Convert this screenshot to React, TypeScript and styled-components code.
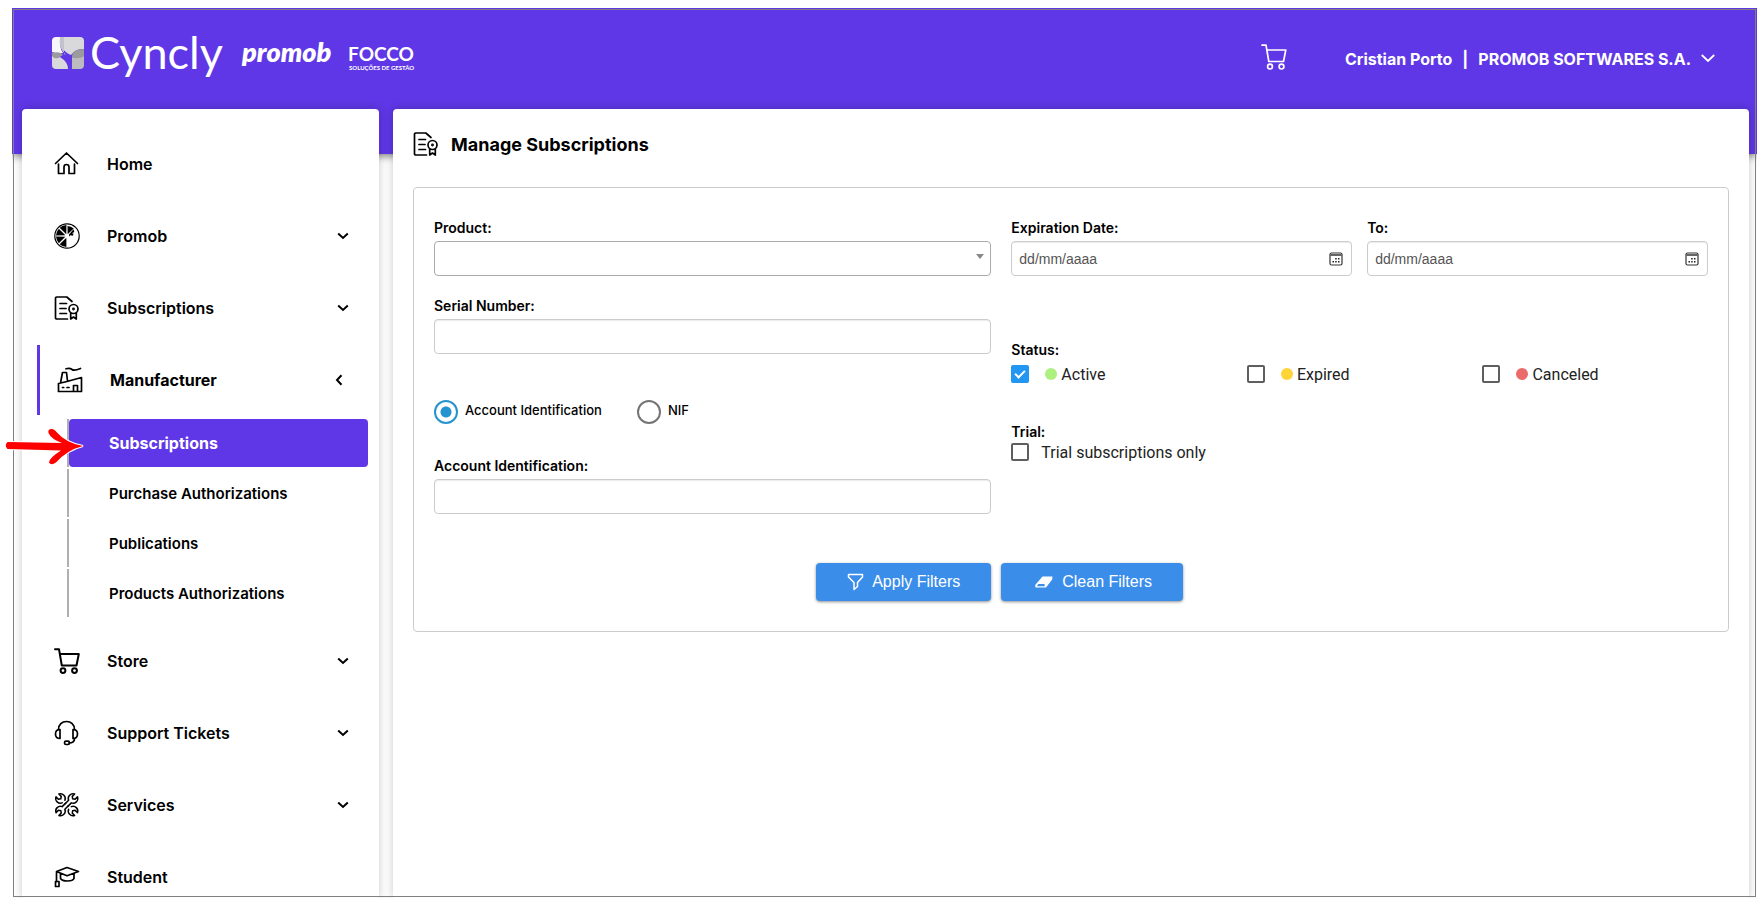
import React from "react";
import styled, { createGlobalStyle, css } from "styled-components";

const PURPLE = "#5f37e6";
const SANS = `Inter, "Liberation Sans", sans-serif`;

const GlobalStyle = createGlobalStyle`
  *, *::before, *::after { box-sizing: border-box; }
  html, body { margin: 0; background: #fff; }
  body { font-family: ${SANS}; color: #000; overflow: hidden; }
  ul { list-style: none; margin: 0; padding: 0; }
  a { color: inherit; text-decoration: none; }
  button, input, select { font: inherit; color: inherit; margin: 0; }
`;

/* ---------- page shell ---------- */

const Page = styled.div`
  position: relative;
  height: 100vh;
  padding: 8px 3px 5px 12px;
`;

const Frame = styled.div`
  position: relative;
  display: flex;
  flex-direction: column;
  height: 100%;
  overflow: hidden;
  &::after {
    content: "";
    position: absolute;
    inset: 1px;
    border: 1px solid #808080;
    pointer-events: none;
  }
`;

const Header = styled.header`
  flex: none;
  display: flex;
  justify-content: space-between;
  align-items: flex-start;
  height: 146px;
  padding: 0 42px 0 40px;
  background: ${PURPLE};
  color: #fff;
  box-shadow: 0 2px 8px rgba(0, 0, 0, 0.5);
`;

const Columns = styled.div`
  position: relative;
  flex: 1;
  min-height: 0;
  display: flex;
  gap: 14px;
  margin-top: -45px;
  padding: 0 8px 0 10px;
`;

const Card = styled.div`
  background: #fff;
  border-radius: 4px 4px 0 0;
  box-shadow: 0 0 10px rgba(0, 0, 0, 0.22);
`;

/* ---------- header ---------- */

const Brands = styled.a`
  display: flex;
  padding-top: 16px;
`;

const Account = styled.div`
  display: flex;
  align-items: center;
  height: 98px;
  gap: 58px;
`;

const IconButton = styled.button`
  display: flex;
  padding: 0;
  border: 0;
  background: none;
  cursor: pointer;
`;

const UserButton = styled(IconButton)`
  align-items: center;
  gap: 10px;
  padding-top: 4px;
  font-size: 16px;
  font-weight: 700;
  line-height: 20px;
  white-space: nowrap;
`;

/* ---------- sidebar ---------- */

const Sidebar = styled(Card).attrs({ as: "nav" })`
  flex: none;
  width: 357px;
  padding: 19px 0 0 15px;
`;

const MenuRow = styled.a<{ $open?: boolean }>`
  display: flex;
  align-items: center;
  gap: 27px;
  height: 72px;
  padding: 0 30px 0 17px;
  font-size: 16px;
  font-weight: 600;
  ${(p) =>
    p.$open &&
    css`
      height: 70px;
      margin: 1px 0;
      padding-right: 33px;
      border-left: 3px solid ${PURPLE};
      font-weight: 700;
    `}
`;

const MenuLabel = styled.span`
  flex: 1;
`;

const SubMenu = styled.ul`
  display: flex;
  flex-direction: column;
  gap: 2px;
  padding: 3px 11px 8px 30px;
`;

const SubItem = styled.li`
  border-left: 2px solid #b0b0b0;
`;

const SubLink = styled.a<{ $active?: boolean }>`
  display: flex;
  align-items: center;
  height: 48px;
  padding-left: 40px;
  border-radius: 4px;
  font-size: ${(p) => (p.$active ? 16 : 15)}px;
  font-weight: ${(p) => (p.$active ? 700 : 600)};
  color: ${(p) => (p.$active ? "#fff" : "#000")};
  background: ${(p) => (p.$active ? PURPLE : "transparent")};
`;

const Pointer = styled.svg`
  position: absolute;
  left: 4px;
  top: 427px;
`;

/* ---------- main ---------- */

const Main = styled(Card).attrs({ as: "main" })`
  flex: 1;
  min-width: 0;
  padding: 20px;
`;

const Title = styled.h1`
  display: flex;
  align-items: center;
  gap: 12px;
  height: 30px;
  margin: 0 0 28px;
  font-size: 18px;
  font-weight: 700;
`;

const Panel = styled.form`
  padding: 30px 20px;
  border: 1px solid #ccc;
  border-radius: 4px;
`;

const Fields = styled.div`
  display: grid;
  grid-template-columns: 4fr 5fr;
  column-gap: 20px;
`;

const FieldStack = styled.div`
  display: flex;
  flex-direction: column;
`;

const Field = styled.div<{ $before?: number }>`
  display: flex;
  flex-direction: column;
  gap: 3px;
  margin-top: ${(p) => p.$before ?? 0}px;
`;

const labelText = css`
  font-size: 14px;
  font-weight: 600;
  line-height: 20px;
`;

const Label = styled.label`
  ${labelText}
`;

const Control = styled.div`
  position: relative;
  display: flex;
  align-items: center;
`;

const box = css`
  width: 100%;
  height: 35px;
  padding: 0 7px;
  border: 1px solid #ccc;
  border-radius: 4px;
  background: #fff;
  outline: 0;
`;

const TextInput = styled.input`
  ${box}
  box-shadow: inset 0 1px 1px rgba(0, 0, 0, 0.08);
  font-family: "Liberation Sans", sans-serif;
  font-size: 14px;
  &::placeholder { color: #555; opacity: 1; }
`;

const Select = styled.select`
  ${box}
  appearance: none;
  border-color: #aaa;
`;

const Caret = styled.span`
  position: absolute;
  right: 7px;
  top: 13px;
  border: 4px solid transparent;
  border-top: 5px solid #888;
  border-bottom: 0;
  pointer-events: none;
`;

const CalendarButton = styled(IconButton)`
  position: absolute;
  right: 9px;
`;

const DateRow = styled.div`
  display: grid;
  grid-template-columns: 1fr 1fr;
  gap: 15px;
`;

const RadioRow = styled.div`
  display: flex;
  gap: 35px;
  margin: 46px 0 32px;
`;

const RadioLabel = styled.label`
  display: flex;
  gap: 7px;
  font-size: 13px;
  font-weight: 500;
  line-height: 21px;
`;

const Radio = styled.input.attrs({ type: "radio" })`
  appearance: none;
  width: 24px;
  height: 24px;
  border: 2px solid #757575;
  border-radius: 50%;
  &:checked {
    border-color: #2693d1;
    background: radial-gradient(circle, #2693d1 5px, #fff 6px);
  }
`;

const Group = styled.fieldset<{ $before: number; $gap: number }>`
  min-width: 0;
  margin: ${(p) => p.$before}px 0 0;
  padding: 0;
  border: 0;
  legend {
    padding: 0;
    margin-bottom: ${(p) => p.$gap}px;
    ${labelText}
  }
`;

const CheckRow = styled.div`
  display: grid;
  grid-template-columns: repeat(3, 1fr);
  column-gap: 10px;
`;

const CheckLabel = styled.label`
  display: flex;
  align-items: center;
  gap: 12px;
  height: 20px;
  font-family: Roboto, sans-serif;
  font-size: 16px;
  color: #222;
`;

const Checkbox = styled.input.attrs({ type: "checkbox" })`
  appearance: none;
  display: grid;
  place-items: center;
  width: 18px;
  height: 18px;
  border: 2px solid #5f5f5f;
  border-radius: 2px;
  &:checked {
    border-color: #2196f3;
    background: #2196f3;
  }
  &:checked::before {
    content: "";
    width: 10px;
    height: 6px;
    border: solid #fff;
    border-width: 0 0 2px 2px;
    transform: translateY(-1px) rotate(-45deg);
  }
`;

const StatusName = styled.span`
  display: flex;
  align-items: center;
  gap: 4px;
  padding-left: 4px;
`;

const Dot = styled.i<{ $color: string }>`
  width: 12px;
  height: 12px;
  border-radius: 50%;
  background: ${(p) => p.$color};
`;

const Actions = styled.div`
  display: flex;
  gap: 10px;
  margin: 49px 0 0 30%;
`;

const ActionButton = styled.button`
  display: flex;
  align-items: center;
  gap: 8px;
  height: 38px;
  padding: 0 31px;
  border: 0;
  border-radius: 4px;
  background: #3a8eea;
  color: #fff;
  box-shadow: 0 1px 3px rgba(0, 0, 0, 0.45);
  font-family: "Liberation Sans", sans-serif;
  font-size: 16px;
`;

/* ---------- drawings ---------- */

const Line = styled.svg.attrs<{ $weight?: number }>((p) => ({
  viewBox: "0 0 26 26",
  width: 26,
  height: 26,
  fill: "none",
  stroke: "currentColor",
  strokeWidth: p.$weight ?? 1.7,
  strokeLinecap: "round",
  strokeLinejoin: "round",
  "aria-hidden": true,
}))<{ $weight?: number }>`
  flex: none;
`;

const HomeIcon = () => (
  <Line>
    <path d="M1.5 12.5 12.5 2l11 10.5M4.5 13v9.5H10V16q0-2.5 2.5-2.5T15 16v6.5h5.5V13" />
  </Line>
);

const wedge = (from: number, r = 11) => {
  const point = (deg: number, radius: number) => {
    const a = (deg * Math.PI) / 180;
    return `${(13 + radius * Math.cos(a)).toFixed(2)} ${(13 + radius * Math.sin(a)).toFixed(2)}`;
  };
  return `M${point(from + 22, 1.8)}L${point(from + 3, r)}A${r} ${r} 0 0 1 ${point(from + 42, r)}Z`;
};

const OrangeIcon = () => (
  <Line>
    <circle cx="13" cy="13" r="12.2" strokeWidth="1.2" />
    <g fill="currentColor" stroke="none">
      {[90, 135, 180, 225].map((a) => (
        <path key={a} d={wedge(a)} />
      ))}
      <path d={wedge(270, 10)} />
      <path d="M15 11.5 19.5 6.2l.8 2.8-2.3 1.2 1.6.5-.8 2-2.5-.5-1.2 1.3z" />
    </g>
  </Line>
);

const CertificateIcon = () => (
  <Line>
    <path d="M13.5 24H2.8Q1.5 24 1.5 22.7V3.3Q1.5 2 2.8 2h10L18 6.5M6 8.5h6.5M6 13.5h6M6 18.5h6.5" />
    <circle cx="19.5" cy="14" r="4.500" />
    <circle cx="19.5" cy="14" r=".6" />
    <path d="M16.7 18v6l2.8-2 2.8 2v-6" />
  </Line>
);

const FactoryIcon = () => (
  <Line>
    <path d="M1.500 24.500V16.500L10 14.500 24.500 10.500V24.500ZM3.500 16 5.500 5.500H9.500L10.500 14M9 1.800q4-1 6 .7t8.500-1M16.500 24V18.500H20.500V24M5.500 20.500h1.200M10 20.500h2" />
  </Line>
);

const CartIcon = ({ weight = 1.7 }: { weight?: number }) => (
  <Line $weight={weight}>
    <path d="M1 1.200H5L7.800 17.500H22.500L24.800 6H6" />
    <circle cx="9" cy="22.600" r="2.400" />
    <circle cx="20.500" cy="22.600" r="2.400" />
  </Line>
);

const HeadsetIcon = () => (
  <Line>
    <path d="M4.500 9.500C4.500 4.500 8 1.500 12.500 1.500S20.500 4.500 20.500 9.500M20.500 18.500Q20.500 23 15 23" />
    <path d="M6 9.500v9Q1.500 18.500 1.500 14T6 9.500ZM19 9.500v9q4.500 0 4.500-4.500T19 9.500Z" />
    <rect x="10.500" y="21.200" width="5" height="3.300" rx="1.600" />
  </Line>
);

const wrenchHead = "M-1.900 4.300A4.700 4.700 0 0 1-2-4.300V-1L0 .5 2-1V-4.300A4.700 4.700 0 0 1 1.900 4.300";

const WrenchesIcon = () => (
  <Line $weight={1.5}>
    <path d={wrenchHead + "V9.200M-1.900 4.300V9.200"} transform="translate(19 6.500) rotate(45)" />
    <path d={wrenchHead + "V9.200M-1.900 4.300V9.200"} transform="translate(6.500 19) rotate(225)" />
    <path d={wrenchHead} transform="translate(6.500 6.500) rotate(-45)" />
    <path d={wrenchHead} transform="translate(19 19) rotate(135)" />
  </Line>
);

const GraduateIcon = () => (
  <Line>
    <path d="M2.500 7.500 13 3.500 24.500 7.500 13 11.800ZM6.500 9.500V14.500Q8 17 13.500 17T20 14.500V9.500M2.500 8.500V17.500" />
    <path d="M1.500 17.500H5V22.500H1.500Z" />
  </Line>
);

const ChevronDown = () => (
  <svg width="12" height="12" viewBox="0 0 12 12" fill="none" stroke="currentColor" strokeWidth="2" aria-hidden="true">
    <path d="M1.200 3.500 6 8l4.800-4.500" />
  </svg>
);

const ChevronLeft = () => (
  <svg width="12" height="12" viewBox="0 0 12 12" fill="none" stroke="currentColor" strokeWidth="2" aria-hidden="true">
    <path d="M7.500 1.200 3 6l4.500 4.800" />
  </svg>
);

const ThinChevron = () => (
  <svg width="14" height="14" viewBox="0 0 14 14" fill="none" stroke="currentColor" strokeWidth="1.800" aria-hidden="true">
    <path d="M.8 3 7 9l6.200-6" />
  </svg>
);

const CalendarIcon = () => (
  <svg width="14" height="14" viewBox="0 0 14 14" aria-hidden="true">
    <rect x="1" y="1" width="12" height="12" rx="1.500" fill="none" stroke="#333" strokeWidth="1.200" />
    <path d="M1 3h12" stroke="#666" strokeWidth="2" />
    <path d="M6.200 6.800h1.500M9 6.800h1.500M3.500 9.800h1.500M6.200 9.800h1.500M9 9.800h1.500" stroke="#222" strokeWidth="1.500" />
  </svg>
);

const FunnelIcon = () => (
  <svg width="17" height="18" viewBox="0 0 17 18" fill="none" stroke="currentColor" strokeWidth="1.500" strokeLinejoin="round" aria-hidden="true">
    <path d="M1.500 1.500H15.500V4L10.500 9.500V13.500L7 16.500V9.500L1.500 4Z" />
  </svg>
);

const EraserIcon = () => (
  <svg width="22" height="14" viewBox="-2 0 22 14" aria-hidden="true">
    <path d="M8.500 1.500H18.500L18.200 4.500 12 12.500H1.500L1.200 10Z" fill="currentColor" />
    <path d="M4.200 9H10.500L10.800 11.200H3Z" fill="#3a8eea" />
  </svg>
);

const Logos = () => (
  <svg width="370" height="64" viewBox="0 -4 370 64" role="img" aria-label="Cyncly, promob, FOCCO">
    <defs>
      <clipPath id="mark">
        <rect x="0" y="9" width="32" height="32" rx="4" />
      </clipPath>
    </defs>
    <g clipPath="url(#mark)">
      <path d="M0 9H9Q7 20 11 25Q5 26 0 24Z" fill="#f7f7fa" />
      <path d="M8 9H32V21Q24 20 19 27Q7 22 8 9Z" fill="#d9d9dc" />
      <path d="M12 9V26L14 27Q6 20 8 9Z" fill="#c4c3cc" />
      <path d="M0 25Q8 23 11 27L6 30Q3 32 0 29Z" fill="#9b9b9d" />
      <path d="M0 28Q3 32 8 29Q16 34 16 41H0Z" fill="#d9d9dc" />
      <path d="M20 29Q24 31 32 28V41H20Z" fill="#bcbcc0" />
      <path d="M32 21V28Q26 32 20 29Q20 21 32 21Z" fill="#9b9b9d" />
    </g>
    <g fill="#fff" fontFamily="Lato, sans-serif">
      <text x="38" y="41" fontSize="45">Cyncly</text>
      <text x="190" y="34" fontSize="27" fontWeight="800" fontStyle="italic">promob</text>
      <text x="296" y="33" fontSize="19" fontWeight="700">FOCCO</text>
      <text x="297" y="42" fontSize="6" fontWeight="700">SOLUÇÕES DE GESTÃO</text>
    </g>
  </svg>
);

/* ---------- content ---------- */

type Entry = { label: string; icon: React.ReactNode; expandable?: boolean; children?: string[] };

const menu: Entry[] = [
  { label: "Home", icon: <HomeIcon /> },
  { label: "Promob", icon: <OrangeIcon />, expandable: true },
  { label: "Subscriptions", icon: <CertificateIcon />, expandable: true },
  {
    label: "Manufacturer",
    icon: <FactoryIcon />,
    children: ["Subscriptions", "Purchase Authorizations", "Publications", "Products Authorizations"],
  },
  { label: "Store", icon: <CartIcon weight={2} />, expandable: true },
  { label: "Support Tickets", icon: <HeadsetIcon />, expandable: true },
  { label: "Services", icon: <WrenchesIcon />, expandable: true },
  { label: "Student", icon: <GraduateIcon /> },
];

const statuses = [
  { name: "Active", color: "#aef07f", checked: true },
  { name: "Expired", color: "#ffd437", checked: false },
  { name: "Canceled", color: "#eb6a6a", checked: false },
];

const DateField = ({ id, label }: { id: string; label: string }) => (
  <Field>
    <Label htmlFor={id}>{label}</Label>
    <Control>
      <TextInput id={id} placeholder="dd/mm/aaaa" />
      <CalendarButton type="button" aria-label="Open calendar">
        <CalendarIcon />
      </CalendarButton>
    </Control>
  </Field>
);

export default function App() {
  return (
    <Page>
      <GlobalStyle />
      <Frame>
        <Header>
          <Brands href="#">
            <Logos />
          </Brands>
          <Account>
            <IconButton aria-label="Cart">
              <CartIcon />
            </IconButton>
            <UserButton>
              <span>Cristian Porto</span>
              <span>|</span>
              <span>PROMOB SOFTWARES S.A.</span>
              <ThinChevron />
            </UserButton>
          </Account>
        </Header>
        <Columns>
          <Sidebar>
            <ul>
              {menu.map((m) => (
                <li key={m.label}>
                  <MenuRow href="#" $open={!!m.children}>
                    {m.icon}
                    <MenuLabel>{m.label}</MenuLabel>
                    {m.expandable && <ChevronDown />}
                    {m.children && <ChevronLeft />}
                  </MenuRow>
                  {m.children && (
                    <SubMenu>
                      {m.children.map((c, i) => (
                        <SubItem key={c}>
                          <SubLink href="#" $active={i === 0}>
                            {c}
                          </SubLink>
                        </SubItem>
                      ))}
                    </SubMenu>
                  )}
                </li>
              ))}
            </ul>
          </Sidebar>
          <Main>
            <Title>
              <CertificateIcon />
              Manage Subscriptions
            </Title>
            <Panel onSubmit={(e) => e.preventDefault()}>
              <Fields>
                <FieldStack>
                  <Field>
                    <Label htmlFor="product">Product:</Label>
                    <Control>
                      <Select id="product" />
                      <Caret />
                    </Control>
                  </Field>
                  <Field $before={20}>
                    <Label htmlFor="serial">Serial Number:</Label>
                    <TextInput id="serial" />
                  </Field>
                  <RadioRow>
                    <RadioLabel>
                      <Radio name="identity" defaultChecked />
                      Account Identification
                    </RadioLabel>
                    <RadioLabel>
                      <Radio name="identity" />
                      NIF
                    </RadioLabel>
                  </RadioRow>
                  <Field>
                    <Label htmlFor="account">Account Identification:</Label>
                    <TextInput id="account" />
                  </Field>
                </FieldStack>
                <FieldStack>
                  <DateRow>
                    <DateField id="from" label="Expiration Date:" />
                    <DateField id="to" label="To:" />
                  </DateRow>
                  <Group $before={64} $gap={4}>
                    <legend>Status:</legend>
                    <CheckRow>
                      {statuses.map((s) => (
                        <CheckLabel key={s.name}>
                          <Checkbox defaultChecked={s.checked} />
                          <StatusName>
                            <Dot $color={s.color} />
                            {s.name}
                          </StatusName>
                        </CheckLabel>
                      ))}
                    </CheckRow>
                  </Group>
                  <Group $before={38} $gap={0}>
                    <legend>Trial:</legend>
                    <CheckLabel>
                      <Checkbox />
                      Trial subscriptions only
                    </CheckLabel>
                  </Group>
                </FieldStack>
              </Fields>
              <Actions>
                <ActionButton type="submit">
                  <FunnelIcon />
                  Apply Filters
                </ActionButton>
                <ActionButton type="reset">
                  <EraserIcon />
                  Clean Filters
                </ActionButton>
              </Actions>
            </Panel>
          </Main>
        </Columns>
      </Frame>
      <Pointer width="84" height="40" viewBox="0 0 84 40" fill="red" stroke="#fff" strokeWidth="2" paintOrder="stroke" aria-hidden="true">
        <path d="M3.500 15 58 16Q47 12 44.500 6Q43.500 1.500 48.500 2Q51 2.500 53 5.500Q62 16 79 19Q63 23 52 35.500Q47 39 45 35.500Q45 31 57 23.500L3.500 22Q0 18.500 3.500 15Z" />
      </Pointer>
    </Page>
  );
}
